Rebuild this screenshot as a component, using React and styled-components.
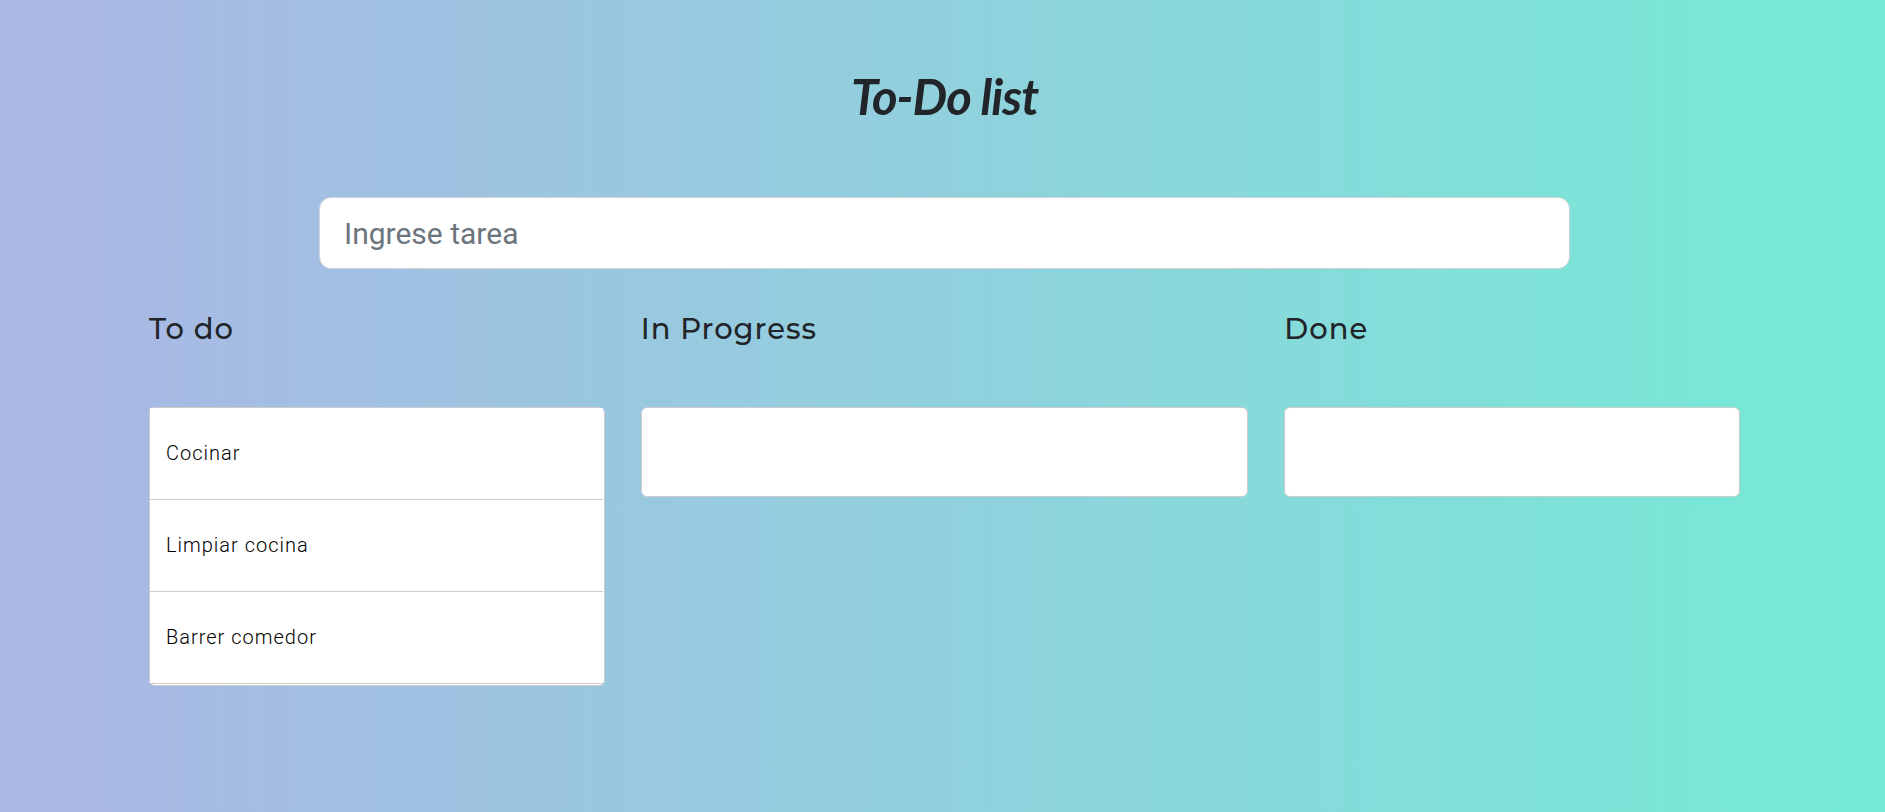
import React from 'react';
import styled, { createGlobalStyle } from 'styled-components';

const GlobalStyle = createGlobalStyle`
  *, *::before, *::after { box-sizing: border-box; }
  body {
    margin: 0;
    font-family: Roboto, sans-serif;
    color: #212529;
  }
`;

const Page = styled.main`
  min-height: 100vh;
  padding: 71px 12px 48px 16px;
  background: linear-gradient(to right, #acb6e5, #74ebd5);
`;

const Title = styled.h1`
  margin: 0 0 76px;
  font: italic 700 49px/50px Lato, sans-serif;
  letter-spacing: -1px;
  text-align: center;
`;

const TaskForm = styled.form`
  max-width: 1251px;
  margin: 0 auto 40px;
`;

const TaskInput = styled.input`
  display: block;
  width: 100%;
  height: 72px;
  padding: 0 24px;
  border: 1px solid #ced4da;
  border-radius: 12px;
  background: #fff;
  color: #212529;
  font: 400 30px/45px Roboto, sans-serif;
  &::placeholder { color: #6c757d; opacity: 1; }
`;

const Board = styled.div`
  display: grid;
  grid-template-columns: 3fr 4fr 3fr;
  gap: 36px;
  align-items: start;
  max-width: 1591px;
  margin: 0 auto;
`;

const ColumnTitle = styled.h2`
  margin: 0 0 58px;
  font: 500 29px/40px Montserrat, Inter, sans-serif;
  letter-spacing: 1px;
`;

const TaskList = styled.ul`
  min-height: 90px;
  margin: 0;
  padding: 0 1px 1px 0;
  list-style: none;
  background: #fff;
  border: 1px solid #ccc;
  border-radius: 6px;
`;

const Task = styled.li`
  padding: 30px 16px;
  border-bottom: 1px solid #ccc;
  background: #fff;
  color: #000;
  font-size: 20px;
  font-weight: 300;
  line-height: 31px;
  letter-spacing: 1px;
`;

const columns = [
  { title: 'To do', tasks: ['Cocinar', 'Limpiar cocina', 'Barrer comedor'] },
  { title: 'In Progress', tasks: [] },
  { title: 'Done', tasks: [] },
];

export default function App() {
  return (
    <>
      <GlobalStyle />
      <Page>
        <Title>To-Do list</Title>
        <TaskForm onSubmit={(e) => e.preventDefault()}>
          <TaskInput type="text" placeholder="Ingrese tarea" aria-label="Ingrese tarea" />
        </TaskForm>
        <Board>
          {columns.map(({ title, tasks }) => (
            <section key={title}>
              <ColumnTitle>{title}</ColumnTitle>
              <TaskList>
                {tasks.map((task) => <Task key={task}>{task}</Task>)}
              </TaskList>
            </section>
          ))}
        </Board>
      </Page>
    </>
  );
}
